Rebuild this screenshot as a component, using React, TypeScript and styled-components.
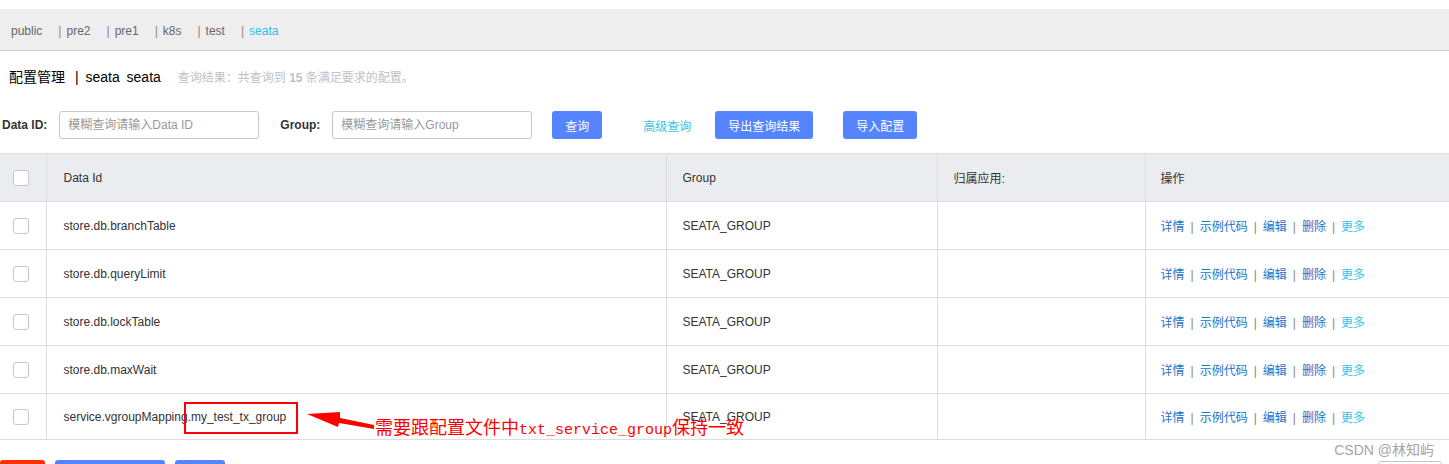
import styled, { createGlobalStyle } from 'styled-components';

const GlobalStyle = createGlobalStyle`
    body {
        margin: 0;
        background: #fff;
        font-family: "Liberation Sans", Arial, "Noto Sans CJK SC", sans-serif;
        font-size: 12px;
        color: #333;
        overflow: hidden;
    }
`

const namespaces = ['public', 'pre2', 'pre1', 'k8s', 'test', 'seata']

const rows = [
    'store.db.branchTable',
    'store.db.queryLimit',
    'store.db.lockTable',
    'store.db.maxWait',
    'service.vgroupMapping.my_test_tx_group',
]

const ops = ['详情', '示例代码', '编辑', '删除']

const App = () => {
    return (
        <>
        <GlobalStyle />
        <Page>
            <NamespaceBar>
                {namespaces.map((ns, i) => (
                    <span key={ns}>
                        {i > 0 && <Sep>|</Sep>}
                        <NsItem $active={ns === 'seata'}>{ns}</NsItem>
                    </span>
                ))}
            </NamespaceBar>

            <TitleRow>
                <Title>配置管理 <span className="bar">|</span> seata <span className="ns">seata</span></Title>
                <ResultText>查询结果：共查询到 <b>15</b> 条满足要求的配置。</ResultText>
            </TitleRow>

            <SearchRow>
                <Label>Data ID:</Label>
                <SearchInput placeholder="模糊查询请输入Data ID" />
                <Label>Group:</Label>
                <SearchInput placeholder="模糊查询请输入Group" />
                <PrimaryButton $w={50}>查询</PrimaryButton>
                <AdvancedLink>高级查询</AdvancedLink>
                <PrimaryButton $w={98}>导出查询结果</PrimaryButton>
                <PrimaryButton $w={74}>导入配置</PrimaryButton>
            </SearchRow>

            <Table>
                <colgroup>
                    <col style={{ width: 46 }} />
                    <col style={{ width: 620 }} />
                    <col style={{ width: 271 }} />
                    <col style={{ width: 208 }} />
                    <col />
                </colgroup>
                <thead>
                    <tr>
                        <CheckCell as="th"><Box /></CheckCell>
                        <HeadCell $pad={17}>Data Id</HeadCell>
                        <HeadCell>Group</HeadCell>
                        <HeadCell>归属应用:</HeadCell>
                        <HeadCell $pad={15}>操作</HeadCell>
                    </tr>
                </thead>
                <tbody>
                    {rows.map((id) => (
                        <tr key={id}>
                            <CheckCell><Box /></CheckCell>
                            <Cell $pad={17}>{id}</Cell>
                            <Cell>SEATA_GROUP</Cell>
                            <Cell></Cell>
                            <Cell $pad={15}>
                                {ops.map((op) => (
                                    <span key={op}>
                                        <OpLink>{op}</OpLink>
                                        <OpSep>|</OpSep>
                                    </span>
                                ))}
                                <OpLink $more>更多</OpLink>
                            </Cell>
                        </tr>
                    ))}
                </tbody>
            </Table>

            <Footer>
                <FooterLeft>
                    <FootButton $color="#ff3000" $w={45}>删除</FootButton>
                    <FootButton $color="#5584ff" $w={110}>导出选中的配置</FootButton>
                    <FootButton $color="#5584ff" $w={50}>克隆</FootButton>
                </FooterLeft>
                <PageSelect />
            </Footer>

            {/* annotation drawn over the screenshot */}
            <HighlightBox />
            <Arrow width="70" height="24" viewBox="0 0 70 24">
                <polygon points="1,3 34,1 34,7 68,14 68,18 33,12 32,16" fill="#ff0000" />
            </Arrow>
            <Note>需要跟配置文件中<Mono>txt_service_group</Mono>保持一致</Note>

            <Watermark>CSDN @林知屿</Watermark>
        </Page>
        </>
    )
}

export default App

const Page = styled.div`
    position: relative;
    width: 1449px;
    height: 464px;
    padding-top: 9px;
    box-sizing: border-box;
    overflow: hidden;
`
const NamespaceBar = styled.div`
    display: flex;
    align-items: center;
    padding: 2px 0 0 11px;
    box-sizing: border-box;
    height: 42px;
    background: #eeeeee;
    border-bottom: 1px solid #cccccc;
    color: #666;
    font-size: 12px;
`
const NsItem = styled.span<{ $active?: boolean }>`
    color: ${p => p.$active ? '#2fbfe3' : '#666'};
    margin-right: 16px;
`
const Sep = styled.span`
    color: #888;
    margin-right: 5px;
`
const TitleRow = styled.div`
    display: flex;
    align-items: center;
    height: 20px;
    margin-top: 15px;
    padding-left: 9px;
`
const Title = styled.div`
    font-size: 14px;
    color: #000;
    white-space: pre;
    .bar {
        margin: 0 3px 0 6px;
    }
    .ns {
        margin-left: 3px;
    }
`
const ResultText = styled.div`
    margin-left: 17px;
    font-size: 12px;
    color: #c1c1c1;
    b {
        font-weight: bold;
    }
`
const SearchRow = styled.div`
    display: flex;
    align-items: center;
    height: 28px;
    margin-top: 25px;
    margin-left: 2px;
`
const Label = styled.label`
    font-weight: bold;
    font-size: 12px;
    color: #333;
    margin-right: 12px;
`
const SearchInput = styled.input`
    width: 200px;
    height: 28px;
    box-sizing: border-box;
    border: 1px solid #c4c6cf;
    border-radius: 3px;
    padding: 0 8px;
    margin-right: 21px;
    font-family: inherit;
    font-size: 12px;
    outline: none;
    &::placeholder {
        color: #999;
    }
    & + label + & {
        margin-right: 20px;
    }
`
const PrimaryButton = styled.button<{ $w: number }>`
    width: ${p => p.$w}px;
    height: 28px;
    margin-right: 30px;
    border: none;
    border-radius: 3px;
    background: #5584ff;
    color: #fff;
    font-family: inherit;
    font-size: 12px;
    padding: 0;
`
const AdvancedLink = styled.a`
    color: #33c4e5;
    font-size: 12px;
    margin: 0 24px 0 11px;
`
const Table = styled.table`
    margin-top: 14px;
    width: 100%;
    table-layout: fixed;
    border-collapse: collapse;
    border-top: 1px solid #dcdee3;
    font-size: 12px;
    color: #333;
    tr {
        height: 48px;
        border-bottom: 1px solid #dcdee3;
    }
    tbody tr:last-child {
        height: 46px;
    }
`
const HeadCell = styled.th<{ $pad?: number }>`
    background: #ebecf0;
    font-weight: normal;
    text-align: left;
    padding: 0 16px 0 ${p => p.$pad ?? 16}px;
    border-left: 1px solid #dcdee3;
`
const Cell = styled.td<{ $pad?: number }>`
    padding: 0 16px 0 ${p => p.$pad ?? 16}px;
    border-left: 1px solid #dcdee3;
    white-space: nowrap;
    overflow: visible;
`
const CheckCell = styled.td`
    padding: 0 0 0 13px;
    background: ${p => p.as === 'th' ? '#ebecf0' : 'transparent'};
    vertical-align: middle;
`
const Box = styled.span`
    display: block;
    width: 16px;
    height: 16px;
    box-sizing: border-box;
    border: 1px solid #c4c6cf;
    border-radius: 3px;
    background: #fff;
`
const OpLink = styled.a<{ $more?: boolean }>`
    color: ${p => p.$more ? '#33c4e5' : '#2073c9'};
`
const OpSep = styled.span`
    color: #888;
    margin: 0 6px;
`
const Footer = styled.div`
    display: flex;
    justify-content: space-between;
    margin-top: 20px;
    padding-right: 7px;
`
const FooterLeft = styled.div`
    display: flex;
    gap: 10px;
`
const FootButton = styled.button<{ $color: string; $w: number }>`
    width: ${p => p.$w}px;
    height: 28px;
    border: none;
    border-radius: 3px;
    background: ${p => p.$color};
    color: #fff;
    font-family: inherit;
    font-size: 12px;
    padding: 0;
`
const PageSelect = styled.div`
    width: 64px;
    height: 28px;
    margin-top: 1px;
    box-sizing: border-box;
    border: 1px solid #c4c6cf;
    border-radius: 3px;
`
const HighlightBox = styled.div`
    position: absolute;
    left: 184px;
    top: 402px;
    width: 114px;
    height: 32px;
    box-sizing: border-box;
    border: 2px solid #ff0000;
`
const Arrow = styled.svg`
    position: absolute;
    left: 306px;
    top: 411px;
`
const Note = styled.div`
    position: absolute;
    left: 375px;
    top: 414px;
    font-family: "Noto Sans CJK SC", sans-serif;
    font-size: 18px;
    line-height: 24px;
    color: #ff0000;
    white-space: nowrap;
`
const Mono = styled.span`
    font-family: "Liberation Mono", "Noto Sans CJK SC", monospace;
    font-size: 15px;
`
const Watermark = styled.div`
    position: absolute;
    right: 15px;
    top: 439px;
    font-family: "Liberation Sans", "Noto Sans CJK SC", sans-serif;
    font-size: 14px;
    color: #a5a5a5;
`
